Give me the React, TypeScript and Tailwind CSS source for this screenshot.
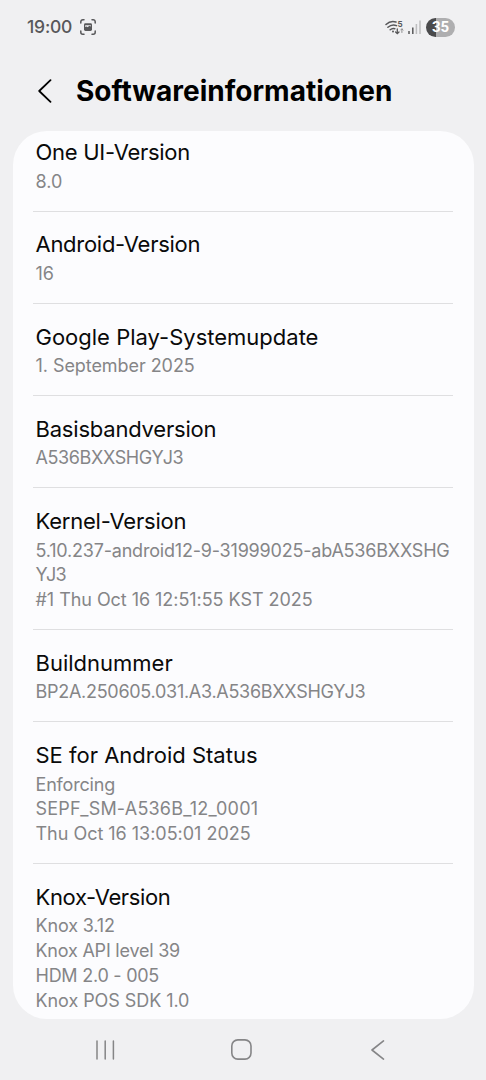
import React from "react";

interface InfoItem {
  title: string;
  titleClass?: string;
  lines: { text: string; className?: string }[];
}

// Tracking is tuned per line to follow the narrower system font
const items: InfoItem[] = [
  { title: "One UI-Version", titleClass: "tracking-[-0.28px]", lines: [{ text: "8.0" }] },
  { title: "Android-Version", titleClass: "tracking-[-0.28px]", lines: [{ text: "16" }] },
  { title: "Google Play-Systemupdate", lines: [{ text: "1. September 2025", className: "tracking-[-0.06px]" }] },
  {
    title: "Basisbandversion",
    titleClass: "tracking-[-0.2px]",
    lines: [{ text: "A536BXXSHGYJ3", className: "tracking-[-0.38px]" }],
  },
  {
    title: "Kernel-Version",
    titleClass: "tracking-[-0.22px]",
    lines: [
      { text: "5.10.237-android12-9-31999025-abA536BXXSHG", className: "tracking-[-0.2px]" },
      { text: "YJ3", className: "tracking-[-1px]" },
      { text: "#1 Thu Oct 16 12:51:55 KST 2025", className: "tracking-[-0.05px]" },
    ],
  },
  {
    title: "Buildnummer",
    lines: [{ text: "BP2A.250605.031.A3.A536BXXSHGYJ3", className: "tracking-[-0.28px]" }],
  },
  {
    title: "SE for Android Status",
    lines: [
      { text: "Enforcing", className: "tracking-[-0.17px]" },
      { text: "SEPF_SM-A536B_12_0001", className: "tracking-[0.21px]" },
      { text: "Thu Oct 16 13:05:01 2025", className: "tracking-[-0.02px]" },
    ],
  },
  {
    title: "Knox-Version",
    titleClass: "tracking-[-0.36px]",
    lines: [
      { text: "Knox 3.12", className: "tracking-[-0.15px]" },
      { text: "Knox API level 39", className: "tracking-[-0.22px]" },
      { text: "HDM 2.0 - 005", className: "tracking-[-0.25px]" },
      { text: "Knox POS SDK 1.0", className: "tracking-[-0.07px]" },
    ],
  },
];

function StatusBar() {
  return (
    <div className="flex h-[54px] shrink-0 items-center pl-[27px] pr-[31px] text-[#58585a]">
      <span className="w-[53px] text-[17.5px] font-medium leading-6 tracking-[-0.2px]">19:00</span>
      {/* Screenshot notification */}
      <svg className="h-4 w-4" viewBox="0 0 16 16" fill="none" stroke="currentColor" strokeWidth="1.5" strokeLinecap="round">
        <path d="M.8 4V2.800a2 2 0 0 1 2-2H4M12 .8h1.200a2 2 0 0 1 2 2V4M15.200 12v1.200a2 2 0 0 1-2 2H12M4 15.200H2.800a2 2 0 0 1-2-2V12" />
        <rect x="4" y="4.300" width="8" height="7.700" rx="1.400" fill="currentColor" stroke="none" />
        <path d="M5.200 8V6.200h5.600v1.300L9.300 6.800 7.700 8.300l-1-.7Z" fill="#f0f0f2" stroke="none" />
      </svg>
      <div className="ml-auto flex items-center">
        {/* Wi-Fi with data arrows */}
        <svg className="h-4 w-5" viewBox="0 0 20 16" fill="none" stroke="currentColor" strokeWidth="1.500" strokeLinecap="round">
          <path d="M1 5.500Q5.500 1.200 11 3M2.900 8.300Q7 4.600 11.500 6.600M5.200 10.800Q7.500 8.800 9.800 9.800" />
          <circle cx="8" cy="12.600" r="1" fill="currentColor" stroke="none" />
          <path d="M12.300 10v4.500M10.600 13l1.700 1.700L14 13" strokeWidth="1.300" />
          <path d="M16.900 13.500V10M15.700 11l1.200-1.200 1.200 1.200" stroke="#8e8e90" strokeWidth="1" />
          <text x="12.400" y="7.800" fontSize="8" fontWeight="700" fill="currentColor" stroke="none">5</text>
        </svg>
        <svg className="ml-[3px] h-[14px] w-[13px]" viewBox="0 0 13 14" fill="none" strokeWidth="1.500">
          <path d="M1 11v3M4.800 7.500V14" stroke="#58585a" />
          <path d="M8.400 4v10M12 .5V14" stroke="#bdbdbf" />
        </svg>
        <div className="ml-[5px] flex h-[19px] w-[29px] items-center justify-center rounded-full bg-[linear-gradient(to_right,#4a4a4c_35%,#aeaeb0_35%)] font-[Roboto,sans-serif] text-[15px] font-bold leading-none text-white">
          35
        </div>
      </div>
    </div>
  );
}

function NavigationBar() {
  return (
    <div className="flex h-[61px] shrink-0 items-center pl-[95px] text-[#858587]">
      <svg className="h-5 w-5" viewBox="0 0 20 20" stroke="currentColor" strokeWidth="1.500" strokeLinecap="round">
        <path d="M2 1v18M10.200 1v18M18.400 1v18" />
      </svg>
      <svg className="ml-[116px] h-[21px] w-[21px]" viewBox="0 0 21 21" fill="none" stroke="currentColor" strokeWidth="1.600">
        <rect x=".8" y=".9" width="19.200" height="19.200" rx="6" />
      </svg>
      <svg className="ml-[119px] h-5 w-[14px]" viewBox="0 0 14 20" fill="none" stroke="currentColor" strokeWidth="1.600" strokeLinecap="round" strokeLinejoin="round">
        <path d="M12.500 .9 1 10l11.500 9.100" />
      </svg>
    </div>
  );
}

export default function App() {
  return (
    <div className="flex h-[1080px] w-[486px] flex-col overflow-hidden bg-[#f0f0f2] font-['Inter','Liberation_Sans',sans-serif]">
      <StatusBar />

      <header className="flex h-[77px] shrink-0 items-center pb-[3px] pl-[37.5px]">
        <svg className="h-6 w-[14px]" viewBox="0 0 14 24" fill="none" stroke="#000" strokeWidth="1.800" strokeLinecap="round" strokeLinejoin="round">
          <path d="M12.500 1.200 1.200 12l11.300 10.800" />
        </svg>
        <h1 className="ml-[24.500px] whitespace-nowrap text-[28px] font-bold leading-9 text-black">Softwareinformationen</h1>
      </header>

      {/* Scrolled list, so the first row is cut at the top */}
      <main className="ml-[12.500px] h-[888px] w-[461px] shrink-0 overflow-hidden rounded-[34px] bg-[#fcfcfe]">
        <div className="-mt-[11.600px] px-[20.500px]">
          {items.map((item) => (
            <section key={item.title} className="border-b border-[#dfdfe1] pb-[16.150px] pl-[2.500px] pt-[18.750px] last:border-b-0">
              <h2 className={`mb-[3.600px] whitespace-nowrap text-[22px] leading-7 text-[#0a0a0a] ${item.titleClass ?? ""}`}>
                {item.title}
              </h2>
              {item.lines.map((line) => (
                <p key={line.text} className={`whitespace-nowrap text-[18px] leading-[24.750px] text-[#858587] ${line.className ?? ""}`}>
                  {line.text}
                </p>
              ))}
            </section>
          ))}
        </div>
      </main>

      <NavigationBar />
    </div>
  );
}
